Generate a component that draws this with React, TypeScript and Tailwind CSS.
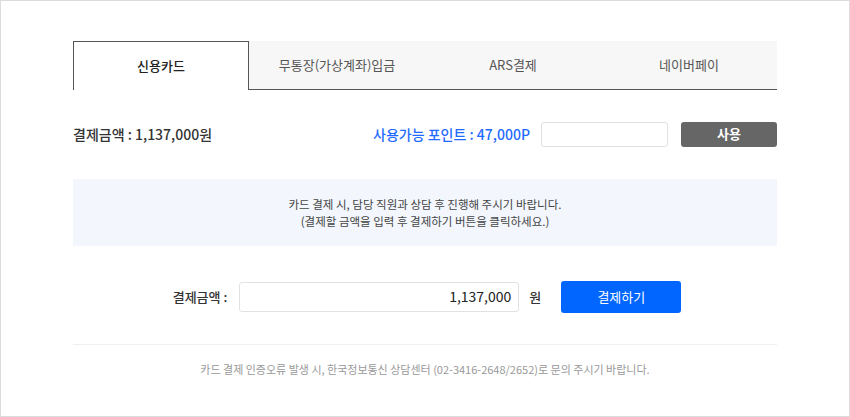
import React from 'react';

const tabs = ['신용카드', '무통장(가상계좌)입금', 'ARS결제', '네이버페이'];

function App() {
  return (
    <div
      className="w-[850px] h-[417px] border border-[#dcdcdc] bg-white overflow-hidden"
      style={{ fontFamily: '"Noto Sans CJK KR", "Noto Sans", sans-serif' }}
    >
      <div className="mx-[72px] pt-[40px]">
        {/* tabs */}
        <div className="flex h-[49px]">
          {tabs.map((t, i) => (
            <div
              key={t}
              className={
                i === 0
                  ? 'w-[176px] flex items-center justify-center border border-b-0 border-[#555] bg-white text-[13px] text-[#222] font-medium'
                  : 'w-[176px] flex items-center justify-center border-b border-[#555] bg-[#f7f7f7] text-[13px] text-[#555]'
              }
            >
              {t}
            </div>
          ))}
        </div>

        {/* amount + points */}
        <div className="flex items-center mt-[31px] h-[26px]">
          <div className="text-[14px] text-[#333] font-medium">결제금액 : 1,137,000원</div>
          <div className="ml-auto text-[14px] text-[#1f6bff] font-medium">사용가능 포인트 : 47,000P</div>
          <input className="ml-[11px] w-[127px] h-[25px] border border-[#e2e2e2] rounded-[3px] outline-none" />
          <button className="ml-[13px] w-[96px] h-[25px] rounded-[3px] bg-[#666] text-white text-[13px] font-bold">
            사용
          </button>
        </div>

        {/* notice */}
        <div className="mt-[32px] h-[67px] bg-[#f3f7fd] flex flex-col items-center justify-center text-[11.5px] text-[#444] leading-[17px]">
          <p>카드 결제 시, 담당 직원과 상담 후 진행해 주시기 바랍니다.</p>
          <p>(결제할 금액을 입력 후 결제하기 버튼을 클릭하세요.)</p>
        </div>

        {/* pay row */}
        <div className="flex items-center justify-center mt-[34px] ml-[4px] h-[33px]">
          <span className="text-[13px] text-[#333] font-medium mr-[12px]">결제금액 :</span>
          <div className="w-[280px] h-[30px] border border-[#e2e2e2] rounded-[3px] flex items-center justify-end px-[7px] text-[14px] text-[#222]">
            1,137,000
          </div>
          <span className="ml-[10px] mr-[20px] text-[13px] text-[#333] font-medium">원</span>
          <button className="w-[120px] h-[32px] rounded-[3px] bg-[#0066ff] text-white text-[13px]">결제하기</button>
        </div>

        <div className="mt-[31px] border-t border-[#efefef]" />

        <p className="mt-[16px] text-center text-[11px] text-[#999]">
          카드 결제 인증오류 발생 시, 한국정보통신 상담센터 (02-3416-2648/2652)로 문의 주시기 바랍니다.
        </p>
      </div>
    </div>
  );
}

export default App;
